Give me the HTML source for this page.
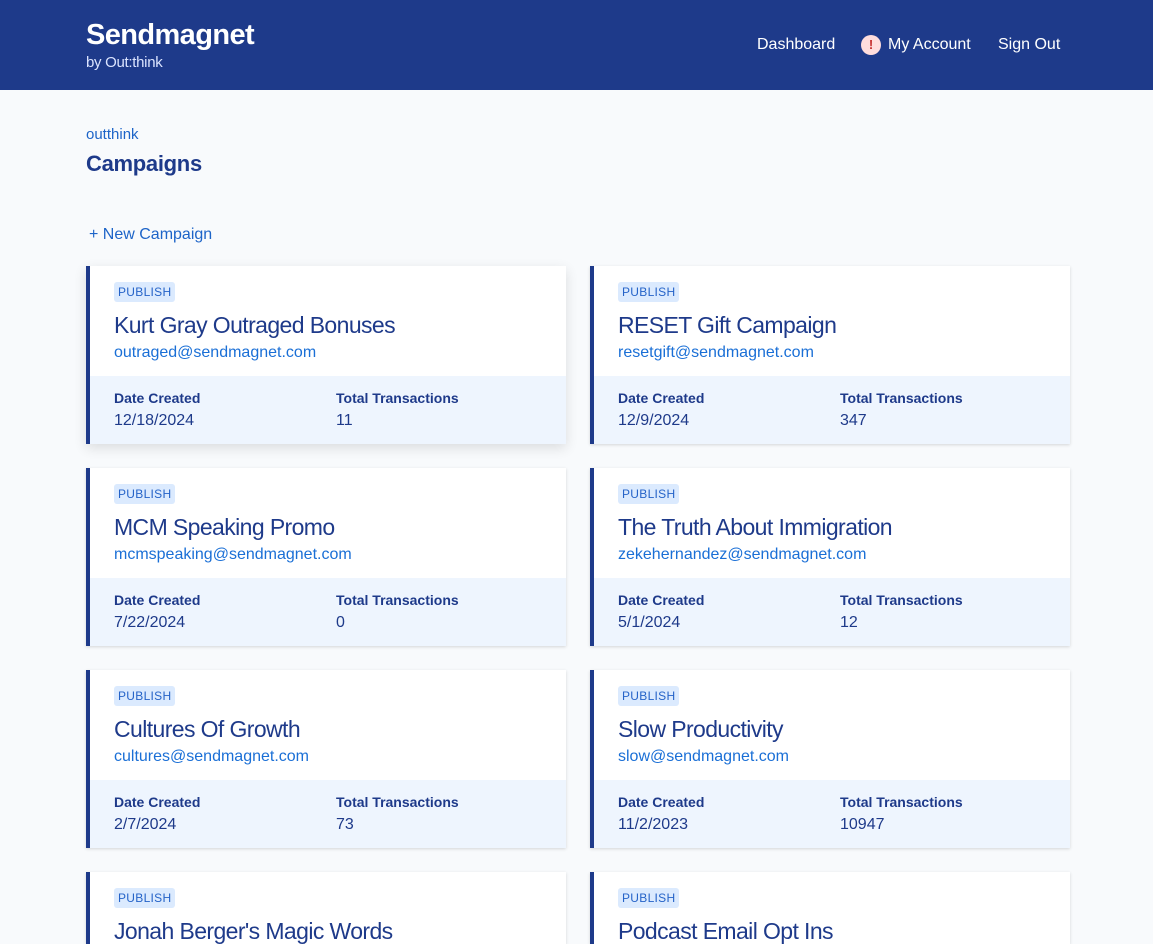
<!DOCTYPE html>
<html style="width:1153px;height:944px;overflow:hidden"><head><meta charset="utf-8"><style>
*{box-sizing:border-box;margin:0;padding:0}
body{width:1153px;height:944px;overflow:hidden;position:relative;background:#f8fafc;font-family:"Liberation Sans",Helvetica,Arial,sans-serif;color:#1e3a8a}
.hd{height:90px;background:#1e3a8a;position:relative;color:#fff}
.logo{position:absolute;left:86px;top:19px;font-size:29px;font-weight:bold;letter-spacing:-0.6px}
.sub{position:absolute;left:86px;top:54px;font-size:15px;color:#dbe4ff;letter-spacing:-0.3px}
.nav{position:absolute;top:36px;font-size:16px}
.warn{position:absolute;left:861px;top:35px;width:20px;height:20px;border-radius:50%;background:#fdd;color:#c53030;font-size:13px;font-weight:bold;text-align:center;line-height:20px}
.crumb{position:absolute;left:86px;top:126px;font-size:15px;color:#1d64c8}
h1{position:absolute;left:86px;top:151px;font-size:22px;font-weight:bold;color:#1e3a8a;letter-spacing:-0.3px}
.new{position:absolute;left:89px;top:226px;font-size:16px;color:#1d64c8}
.card{position:absolute;width:480px;height:178px;background:#fff;border-left:4px solid #1e3a8a;box-shadow:0 1px 3px rgba(0,0,0,.15);overflow:hidden}
.card.big{box-shadow:0 4px 12px rgba(0,0,0,.12)}
.badge{position:absolute;left:24px;top:16px;height:20px;padding:0 4px;background:#dbeafe;color:#2563c8;font-size:12px;line-height:20px;border-radius:3px;letter-spacing:.3px}
.t{position:absolute;left:24px;top:46px;font-size:23px;letter-spacing:-0.6px;white-space:nowrap}
.e{position:absolute;left:24px;top:78px;font-size:16px;color:#1a6fd6}
.bot{position:absolute;left:0;right:0;top:110px;height:68px;background:#eef5fe}
.l{position:absolute;top:14px;font-size:14px;font-weight:bold}
.v{position:absolute;top:36px;font-size:16px}
</style></head><body>
<div class="hd">
<div class="logo">Sendmagnet</div><div class="sub">by Out:think</div>
<div class="nav" style="left:757px">Dashboard</div>
<div class="warn">!</div>
<div class="nav" style="left:888px">My Account</div>
<div class="nav" style="left:998px">Sign Out</div>
</div>
<div class="crumb">outthink</div>
<h1>Campaigns</h1>
<div class="new">+ New Campaign</div>

<div class="card big" style="left:86px;top:266px"><div class="badge">PUBLISH</div><div class="t">Kurt Gray Outraged Bonuses</div><div class="e">outraged@sendmagnet.com</div><div class="bot"><div class="l" style="left:24px">Date Created</div><div class="v" style="left:24px">12/18/2024</div><div class="l" style="left:246px">Total Transactions</div><div class="v" style="left:246px">11</div></div></div>
<div class="card" style="left:590px;top:266px"><div class="badge">PUBLISH</div><div class="t">RESET Gift Campaign</div><div class="e">resetgift@sendmagnet.com</div><div class="bot"><div class="l" style="left:24px">Date Created</div><div class="v" style="left:24px">12/9/2024</div><div class="l" style="left:246px">Total Transactions</div><div class="v" style="left:246px">347</div></div></div>

<div class="card" style="left:86px;top:468px"><div class="badge">PUBLISH</div><div class="t">MCM Speaking Promo</div><div class="e">mcmspeaking@sendmagnet.com</div><div class="bot"><div class="l" style="left:24px">Date Created</div><div class="v" style="left:24px">7/22/2024</div><div class="l" style="left:246px">Total Transactions</div><div class="v" style="left:246px">0</div></div></div>
<div class="card" style="left:590px;top:468px"><div class="badge">PUBLISH</div><div class="t">The Truth About Immigration</div><div class="e">zekehernandez@sendmagnet.com</div><div class="bot"><div class="l" style="left:24px">Date Created</div><div class="v" style="left:24px">5/1/2024</div><div class="l" style="left:246px">Total Transactions</div><div class="v" style="left:246px">12</div></div></div>

<div class="card" style="left:86px;top:670px"><div class="badge">PUBLISH</div><div class="t">Cultures Of Growth</div><div class="e">cultures@sendmagnet.com</div><div class="bot"><div class="l" style="left:24px">Date Created</div><div class="v" style="left:24px">2/7/2024</div><div class="l" style="left:246px">Total Transactions</div><div class="v" style="left:246px">73</div></div></div>
<div class="card" style="left:590px;top:670px"><div class="badge">PUBLISH</div><div class="t">Slow Productivity</div><div class="e">slow@sendmagnet.com</div><div class="bot"><div class="l" style="left:24px">Date Created</div><div class="v" style="left:24px">11/2/2023</div><div class="l" style="left:246px">Total Transactions</div><div class="v" style="left:246px">10947</div></div></div>

<div class="card" style="left:86px;top:872px;height:72px"><div class="badge">PUBLISH</div><div class="t">Jonah Berger's Magic Words</div></div>
<div class="card" style="left:590px;top:872px;height:72px"><div class="badge">PUBLISH</div><div class="t">Podcast Email Opt Ins</div></div>
</body></html>
